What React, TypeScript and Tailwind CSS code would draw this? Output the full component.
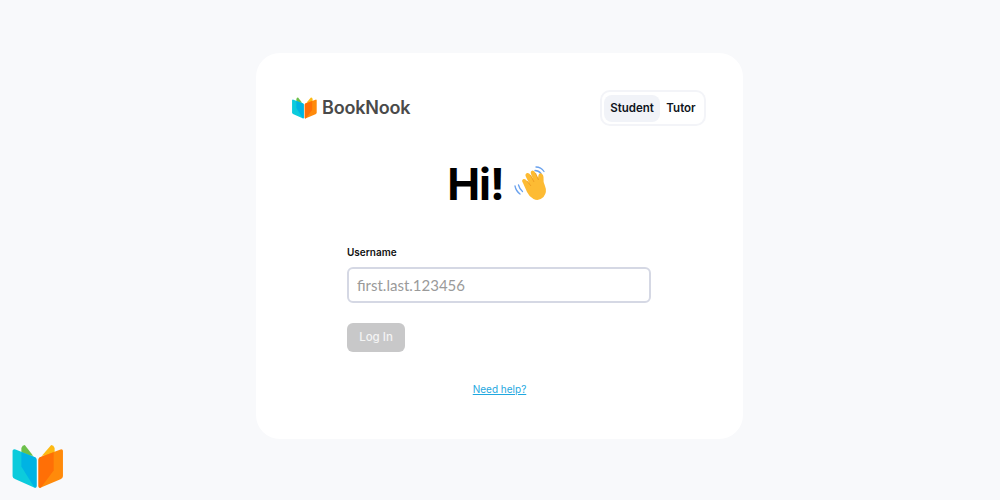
import React from 'react';

const BookLogo: React.FC<{ className?: string }> = ({ className }) => (
  <svg viewBox="0 0 52 46" className={className}>
    <path d="M9 4 Q10 1 12.500 1 L21 12 L9 12 Z" fill="#6cc04a" />
    <path d="M43 4 Q42 1 39.500 1 L30 12 L43 12 Z" fill="#fdb913" />
    <path d="M0 7 Q0 5 3 5.500 L23 13.500 Q24.500 14.500 24.500 16 L24.500 43 Q24.500 45.500 22 44.500 L3 36 Q0 35 0 33 Z" fill="#0ccbdc" />
    <path d="M9 8.500 L23 13.500 Q24.500 14.500 24.500 16 L24.500 43 Q24.500 45.500 22 44 L9 23 Z" fill="#00b3e3" />
    <path d="M49 5.500 Q51.500 5 51.500 7 L51.500 33 Q51.500 35 49 36 L29 44.500 Q26.500 45.500 26.500 43 L26.500 16 Q26.500 14.500 28 13.500 Z" fill="#ff8a0a" />
    <path d="M42 8.500 L28 13.500 Q26.500 14.500 26.500 16 L26.500 43 Q26.500 45.500 29 44.500 L42 27 Z" fill="#ff6f06" />
  </svg>
);

const WaveHand: React.FC = () => (
  <svg viewBox="0 0 36 36" className="h-[36px] w-[36px]">
    <path d="M1 20 Q2 25 6 28 M4.500 19 Q5.500 23 8.500 25.500" stroke="#6aa2ee" strokeWidth="1.300" fill="none" strokeLinecap="round" />
    <path d="M22 1 Q27 1 30 5.500 M21 4.500 Q24.500 4.500 27 7.500" stroke="#6aa2ee" strokeWidth="1.300" fill="none" strokeLinecap="round" />
    <path d="M9 17 Q7 14 9.500 13 Q11.500 12.500 13 15 L15 17 L12 11 Q10.500 8 13 7 Q15 6.500 16.500 9 L19 13 L17 8 Q16 5 18.500 4.500 Q20.500 4.500 21.500 7 L24 12 L24.500 9 Q25.500 6.500 27.500 7.500 Q29.500 8.500 29.500 11 Q29 16 31 20 Q33.500 26 29.500 31 Q25 35.500 19.500 33 Q15 30.500 13 26 Z" fill="#fdbb33" />
    <path d="M16.500 9 L20 16 M21.500 7 L24.500 14 M13 15 L17 20" stroke="#e8941c" strokeWidth="0.700" fill="none" />
  </svg>
);

const App: React.FC = () => {
  return (
    <div className="flex h-[500px] w-[1000px] justify-center overflow-hidden bg-[#f8f9fb] pr-[1px] pt-[53px] font-['Inter',sans-serif]">
      <div className="h-[386px] w-[487px] rounded-[24px] bg-white px-[36px] pt-[36px]">
        <div className="flex h-[38px] items-center justify-between">
          <div className="flex items-center gap-[5px]">
            <BookLogo className="h-[22px] w-[25px]" />
            <span className="text-[18px] font-semibold leading-none tracking-[-0.2px] text-[#4a4a4a]">BookNook</span>
          </div>
          <div className="mr-[1px] flex h-[36px] items-center rounded-[10px] border-2 border-[#f3f4f8] p-[2px] text-[11.500px] font-semibold text-[#0f1420]">
            <span className="flex h-[27px] w-[56px] items-center justify-center rounded-[8px] bg-[#f1f3f8] pt-[1px]">Student</span>
            <span className="flex h-[27px] w-[42px] items-center justify-center pt-[1px]">Tutor</span>
          </div>
        </div>

        <div className="mt-[29px] flex items-center justify-center gap-[10px] pr-[2px]">
          <h1 className="text-[44px] font-bold leading-[56px] tracking-[-1px] text-black">Hi!</h1>
          <WaveHand />
        </div>

        <div className="ml-[55px] mt-[32px] w-[304px]">
          <label className="block text-[10px] font-semibold leading-[16px] text-[#111]">Username</label>
          <input
            readOnly
            placeholder="first.last.123456"
            className="mt-[7px] block h-[36px] w-full rounded-[6px] border-2 border-[#d5d8e4] bg-white px-[8px] font-['Lato',sans-serif] text-[15px] placeholder:text-[#9a9a9a]"
          />
          <button className="mt-[20px] block h-[29px] w-[58px] rounded-[6px] bg-[#c8c8c9] text-[11.500px] font-medium text-[#f4f4f4]">Log In</button>
        </div>

        <div className="mt-[23px] text-center">
          <a href="#" className="text-[10px] text-[#1fa8e0] underline">Need help?</a>
        </div>
      </div>

      <BookLogo className="absolute bottom-[11px] left-[12px] h-[45px] w-[52px]" />
    </div>
  );
};

export default App;
